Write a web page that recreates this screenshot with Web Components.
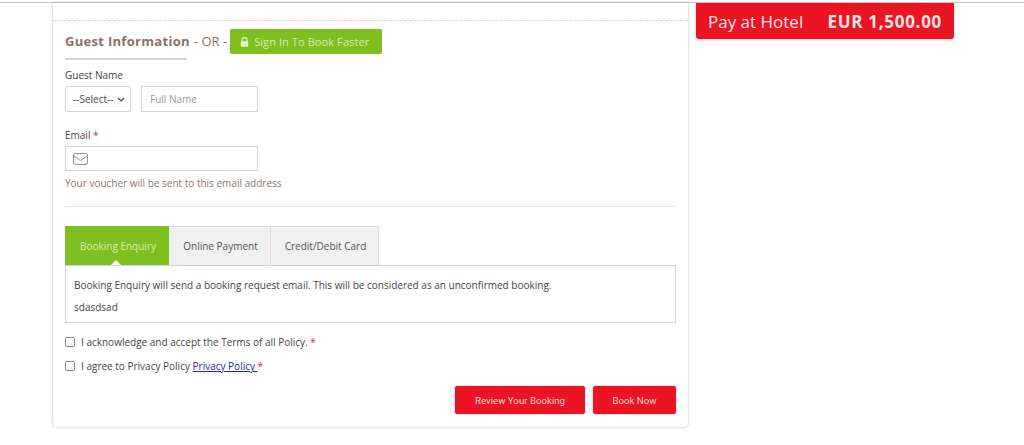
<!DOCTYPE html>
<html>
<head>
<meta charset="utf-8">
<style>
html, body { margin: 0; padding: 0; background: #fff; }
body { font-family: "Open Sans", "Liberation Sans", sans-serif; height: 445px; overflow: hidden; }
</style>
</head>
<body>
<booking-page>
  <guest-form slot="main"></guest-form>
  <pay-total slot="side" label="Pay at Hotel" amount="EUR 1,500.00"></pay-total>
</booking-page>

<script>
class BookingPage extends HTMLElement {
    constructor() {
        super();
        this.attachShadow({ mode: 'open' });
        this.shadowRoot.innerHTML = `
            <style>
                :host {
                    display: grid;
                    grid-template-columns: 635px 258px;
                    column-gap: 8px;
                    align-items: start;
                    padding-left: 53px;
                    margin-top: 2px;
                    border-top: 1px solid #c9c9c9;
                }
            </style>
            <slot name="main"></slot>
            <slot name="side"></slot>
        `;
    }
}
customElements.define('booking-page', BookingPage);

class PayTotal extends HTMLElement {
    constructor() {
        super();
        this.attachShadow({ mode: 'open' });
        this.shadowRoot.innerHTML = `
            <style>
                :host {
                    display: flex;
                    justify-content: space-between;
                    align-items: center;
                    height: 36px;
                    box-sizing: border-box;
                    padding: 0 12px;
                    background: #ea1424;
                    color: #fbe3e5;
                    border-radius: 0 0 3px 3px;
                    box-shadow: 0 1px 3px rgba(0,0,0,.2);
                }
                .label { font-size: 17px; }
                .amount { font-size: 17px; font-weight: 700; letter-spacing: .7px; }
            </style>
            <span class="label"></span><span class="amount"></span>
        `;
    }
    connectedCallback() {
        this.shadowRoot.querySelector('.label').textContent = this.getAttribute('label');
        this.shadowRoot.querySelector('.amount').textContent = this.getAttribute('amount');
    }
}
customElements.define('pay-total', PayTotal);

class PayTabs extends HTMLElement {
    constructor() {
        super();
        this.attachShadow({ mode: 'open' });
        this.shadowRoot.innerHTML = `
            <style>
                :host { display: block; font-size: 10px; color: #444; }
                .tabs { display: flex; height: 39px; }
                .tab {
                    display: flex;
                    align-items: center;
                    justify-content: center;
                    box-sizing: border-box;
                    padding-left: 2px;
                    background: #f0f0f0;
                    border: 1px solid #ddd;
                    border-bottom: 0;
                    border-left: 0;
                    color: #555;
                }
                .tab.on {
                    position: relative;
                    background: #7fbf1f;
                    color: #d4ecb0;
                    border: 0;
                }
                .tab.on::after {
                    content: "";
                    position: absolute;
                    left: 46px;
                    bottom: 0;
                    border: 5px solid transparent;
                    border-top: 0;
                    border-bottom-color: #fff;
                }
                .body {
                    height: 58px;
                    box-sizing: border-box;
                    border: 1px solid #d3d3d3;
                    padding: 12px 8px 0;
                    display: flex;
                    flex-direction: column;
                    gap: 8px;
                    line-height: 14px;
                }
            </style>
            <div class="tabs">
                <div class="tab on" style="width:104px">Booking Enquiry</div>
                <div class="tab" style="width:102px">Online Payment</div>
                <div class="tab" style="width:108px">Credit/Debit Card</div>
            </div>
            <div class="body">
                <div>Booking Enquiry will send a booking request email. This will be considered as an unconfirmed booking.</div>
                <div>sdasdsad</div>
            </div>
        `;
    }
}
customElements.define('pay-tabs', PayTabs);

class GuestForm extends HTMLElement {
    constructor() {
        super();
        this.attachShadow({ mode: 'open' });
        this.shadowRoot.innerHTML = `
            <style>
                :host {
                    display: block;
                    box-sizing: border-box;
                    height: 424px;
                    background: #fff;
                    border-radius: 0 0 4px 4px;
                    box-shadow: 0 0 3px rgba(0,0,0,.28);
                    color: #444;
                    font-size: 10px;
                }
                .top { height: 17px; border-bottom: 1px dashed #d5d5d5; }
                .inner { padding: 8px 12px 0; }
                .head { display: flex; align-items: center; height: 25px; gap: 4px; }
                h3 { margin: -2px 0 0; font-size: 13px; font-weight: 700; color: #8b716a; letter-spacing: .3px; }
                .or { font-size: 13px; color: #8b716a; margin: -2px -1px 0 0; }
                .signin {
                    display: flex;
                    align-items: center;
                    gap: 4px;
                    box-sizing: border-box;
                    width: 152px;
                    height: 25px;
                    padding-left: 10px;
                    background: #7fbf1f;
                    color: #d4ecb0;
                    border-radius: 2px;
                    font-size: 11.2px;
                }
                .signin span { margin-left: 1px; }
                .rule { width: 122px; height: 2px; background: #d8d4d2; margin: 4px 0 8px; }
                label { display: block; line-height: 14px; }
                .req { color: #d8203a; }
                .row { display: flex; gap: 10px; margin-top: 4px; }
                .select {
                    display: flex;
                    align-items: center;
                    justify-content: space-between;
                    box-sizing: border-box;
                    width: 66px; height: 26px;
                    padding: 0 5px 0 7px;
                    border: 1px solid #d5d5d5;
                    border-radius: 2px;
                }
                .field {
                    box-sizing: border-box;
                    width: 117px; height: 26px;
                    border: 1px solid #d5d5d5;
                    padding: 0 8px;
                    color: #999;
                    font-size: 10px;
                    display: flex;
                    align-items: center;
                }
                .email { width: 193px; height: 25px; margin-top: 4px; }
                .email svg { display: block; }
                .hint { color: #8b7a72; margin-top: 5px; line-height: 14px; }
                hr { border: 0; border-top: 1px solid #e4e4e4; margin: 16px 0 19px; }
                .check { display: flex; align-items: center; gap: 6px; height: 14px; }
                .box {
                    box-sizing: border-box;
                    width: 10px; height: 10px;
                    border: 1px solid #8a8a8a;
                    border-radius: 2px;
                    background: #fff;
                }
                a { color: #2a2a9c; text-decoration: underline; }
                .btns { display: flex; justify-content: flex-end; gap: 8px; margin-top: 13px; }
                .btn {
                    display: flex;
                    align-items: center;
                    justify-content: center;
                    height: 28px;
                    background: #ea1424;
                    color: #fbd3d7;
                    font: 9.7px Roboto, "Liberation Sans", sans-serif;
                    border-radius: 2px;
                    box-shadow: 0 0 2px rgba(0,0,0,.25);
                }
            </style>
            <div class="top"></div>
            <div class="inner">
                <div class="head">
                    <h3>Guest Information</h3>
                    <span class="or">- OR -</span>
                    <div class="signin">
                        <svg width="9" height="10" viewBox="0 0 9 10"><path d="M2 4.5V3a2.5 2.5 0 0 1 5 0v1.5" fill="none" stroke="#e3f2cc" stroke-width="1.3"/><rect x="0.8" y="4.3" width="7.4" height="5.4" rx="1" fill="#e3f2cc"/></svg>
                        <span>Sign In To Book Faster</span>
                    </div>
                </div>
                <div class="rule"></div>
                <label>Guest Name</label>
                <div class="row">
                    <div class="select"><span>--Select--</span><svg width="8" height="5" viewBox="0 0 8 5"><path d="M1 1l3 3 3-3" fill="none" stroke="#444" stroke-width="1.2"/></svg></div>
                    <div class="field">Full Name</div>
                </div>
                <label style="margin-top:16px">Email <span class="req">*</span></label>
                <div class="field email">
                    <svg width="15" height="12" viewBox="0 0 15 12" style="margin-left:-1px"><rect x="0.6" y="0.6" width="13.8" height="10.8" rx="1.2" fill="none" stroke="#8f8f8f" stroke-width="1"/><path d="M1 3l6.5 4.6L14 3" fill="none" stroke="#8f8f8f" stroke-width="1"/></svg>
                </div>
                <div class="hint">Your voucher will be sent to this email address</div>
                <hr>
                <pay-tabs></pay-tabs>
                <div class="check" style="margin-top:12px"><span class="box"></span><span>I acknowledge and accept the Terms of all Policy. <span class="req">*</span></span></div>
                <div class="check" style="margin-top:10px"><span class="box"></span><span>I agree to Privacy Policy <a href="#">Privacy Policy </a> <span class="req">*</span></span></div>
                <div class="btns">
                    <div class="btn" style="width:130px">Review Your Booking</div>
                    <div class="btn" style="width:83px">Book Now</div>
                </div>
            </div>
        `;
    }
}
customElements.define('guest-form', GuestForm);
</script>
</body>
</html>
